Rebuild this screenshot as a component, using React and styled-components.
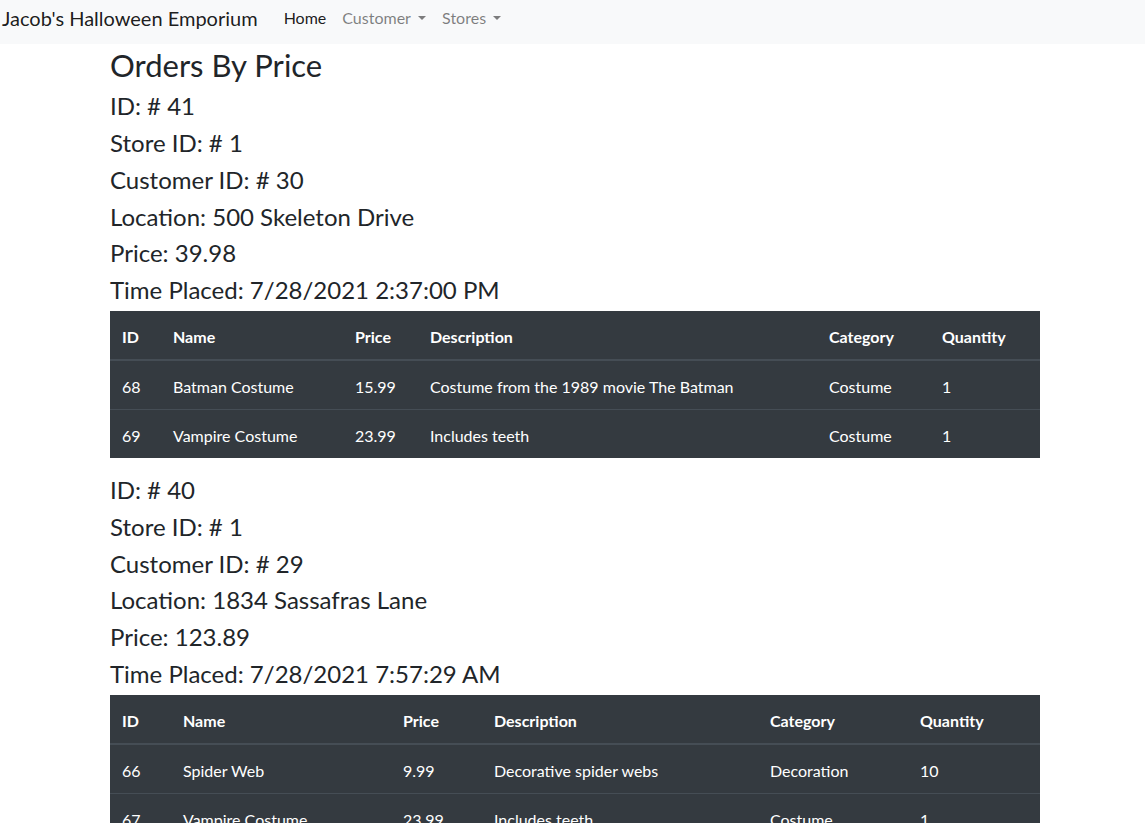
import React from "react";
import styled, { createGlobalStyle } from "styled-components";

const orders = [
  {
    id: 41,
    storeId: 1,
    customerId: 30,
    location: "500 Skeleton Drive",
    price: "39.98",
    time: "7/28/2021 2:37:00 PM",
    cols: [51, 182, 75, 399, 113, 110],
    items: [
      { id: 68, name: "Batman Costume", price: "15.99", description: "Costume from the 1989 movie The Batman", category: "Costume", quantity: 1 },
      { id: 69, name: "Vampire Costume", price: "23.99", description: "Includes teeth", category: "Costume", quantity: 1 }
    ]
  },
  {
    id: 40,
    storeId: 1,
    customerId: 29,
    location: "1834 Sassafras Lane",
    price: "123.89",
    time: "7/28/2021 7:57:29 AM",
    cols: [61, 220, 91, 276, 150, 132],
    items: [
      { id: 66, name: "Spider Web", price: "9.99", description: "Decorative spider webs", category: "Decoration", quantity: 10 },
      { id: 67, name: "Vampire Costume", price: "23.99", description: "Includes teeth", category: "Costume", quantity: 1 }
    ]
  }
];

function App() {
  return (
    <>
      <GlobalStyle />
      <Navbar>
        <Brand>Jacob's Halloween Emporium</Brand>
        <NavList>
          <NavLink $active>Home</NavLink>
          <NavLink $dropdown>Customer</NavLink>
          <NavLink $dropdown>Stores</NavLink>
        </NavList>
      </Navbar>
      <Container>
        <Title>Orders By Price</Title>
        {orders.map((order) => (
          <Order key={order.id}>
            <Line>ID: # {order.id}</Line>
            <Line>Store ID: # {order.storeId}</Line>
            <Line>Customer ID: # {order.customerId}</Line>
            <Line>Location: {order.location}</Line>
            <Line>Price: {order.price}</Line>
            <Line>Time Placed: {order.time}</Line>
            <Table>
              <colgroup>
                {order.cols.map((w, i) => (
                  <col key={i} style={{ width: w }} />
                ))}
              </colgroup>
              <thead>
                <tr>
                  <Th>ID</Th>
                  <Th>Name</Th>
                  <Th>Price</Th>
                  <Th>Description</Th>
                  <Th>Category</Th>
                  <Th>Quantity</Th>
                </tr>
              </thead>
              <tbody>
                {order.items.map((item) => (
                  <tr key={item.id}>
                    <Td>{item.id}</Td>
                    <Td>{item.name}</Td>
                    <Td>{item.price}</Td>
                    <Td>{item.description}</Td>
                    <Td>{item.category}</Td>
                    <Td>{item.quantity}</Td>
                  </tr>
                ))}
              </tbody>
            </Table>
          </Order>
        ))}
      </Container>
    </>
  );
}

const GlobalStyle = createGlobalStyle`
  * { box-sizing: border-box; }
  body {
    margin: 0;
    font-family: Lato, "Open Sans", sans-serif;
    font-size: 16px;
    line-height: 1.5;
    color: #212529;
    background-color: #fff;
  }
`;

const Navbar = styled.nav`
  display: flex;
  align-items: center;
  height: 44px;
  padding: 0 2px 8px;
  background-color: #f8f9fa;
`;

const Brand = styled.a`
  font-size: 20px;
  line-height: 30px;
  color: rgba(0, 0, 0, 0.9);
  margin-right: 18px;
  white-space: nowrap;
`;

const NavList = styled.div`
  display: flex;
`;

const NavLink = styled.a`
  padding: 0 8px;
  font-size: 16px;
  color: ${(p) => (p.$active ? "rgba(0, 0, 0, 0.9)" : "rgba(0, 0, 0, 0.5)")};
  white-space: nowrap;

  &::after {
    display: ${(p) => (p.$dropdown ? "inline-block" : "none")};
    content: "";
    margin-left: 0.45em;
    vertical-align: 0.255em;
    border-top: 0.3em solid;
    border-right: 0.3em solid transparent;
    border-left: 0.3em solid transparent;
  }
`;

const Container = styled.main`
  width: 930px;
  margin-left: 110px;
  padding-top: 3px;
`;

const Title = styled.h2`
  margin: 0 0 6px;
  font-size: 31px;
  font-weight: 400;
  line-height: 1.2;
`;

const Order = styled.section`
  display: flex;
  flex-direction: column;
`;

const Line = styled.h4`
  margin: 0 0 6px;
  padding-top: 2px;
  font-size: 24px;
  font-weight: 400;
  line-height: 1.2;
  height: 30.8px;
`;

const Table = styled.table`
  width: 100%;
  margin-bottom: 16px;
  table-layout: fixed;
  border-collapse: collapse;
  color: #fff;
  background-color: #343a40;
`;

const Th = styled.th`
  padding: 14px 12px 10px;
  text-align: left;
  font-weight: 700;
  vertical-align: bottom;
  border-bottom: 2px solid #454d55;
  white-space: nowrap;
`;

const Td = styled.td`
  padding: 14px 12px 10px;
  vertical-align: top;
  border-top: 1px solid #454d55;
  white-space: nowrap;
`;

export default App;
